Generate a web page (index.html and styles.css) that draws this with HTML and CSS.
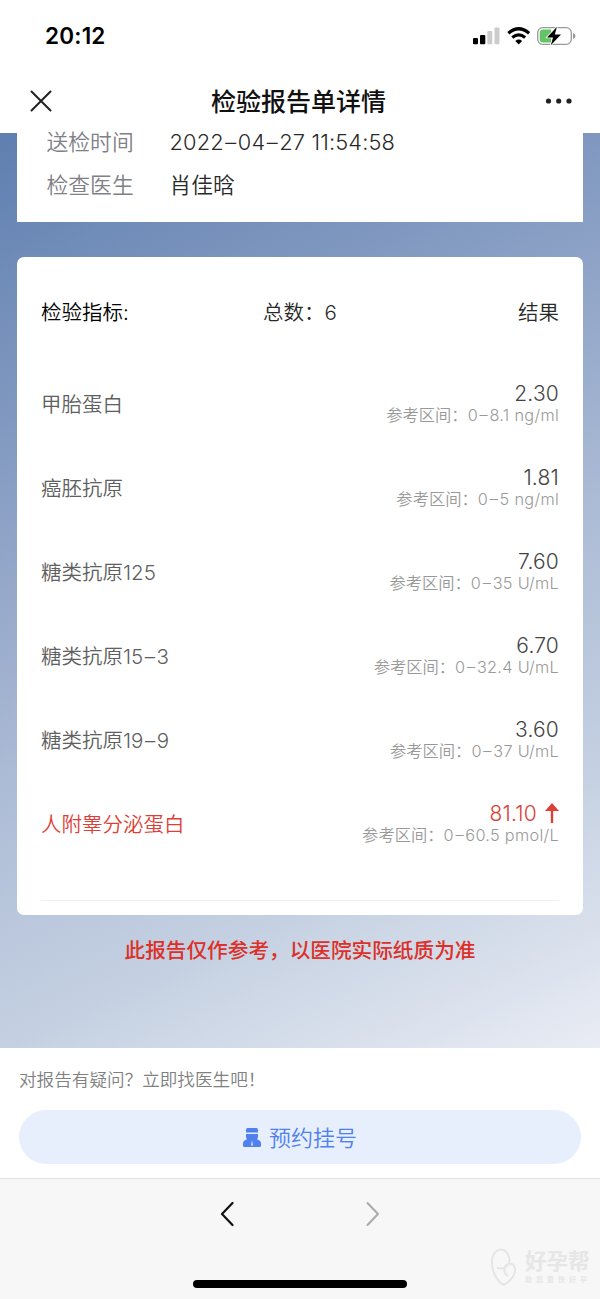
FILE: index.html
```html
<!DOCTYPE html>
<html lang="zh-CN">
<head>
<meta charset="utf-8">
<title>检验报告单详情</title>
<link rel="stylesheet" href="styles.css">
</head>
<body>
<div class="screen">
  <header class="top">
    <div class="status">
      <span class="clock">20:12</span>
      <svg class="status-icons" width="104" height="20" viewBox="0 0 104 20">
        <rect x="1" y="12" width="5" height="6.300" rx="1"/>
        <rect x="8" y="9" width="5.300" height="9.300" rx="1"/>
        <g fill="#ccc"><rect x="15.300" y="5" width="5" height="13.300" rx="1"/><rect x="22.500" y="1.500" width="5" height="16.800" rx="1"/></g>
        <g fill="none" stroke="#000" stroke-width="3.200">
          <path d="M36.300 7.200Q46.700-1.700 57.100 7.200"/>
          <path d="M40.300 11.400Q46.700 6.200 53.100 11.400"/>
        </g>
        <path d="M43.300 15Q46.700 12.200 50.100 15L46.700 18.400Z"/>
        <rect x="65.700" y="1.700" width="33.600" height="16.600" rx="5" fill="#fff" stroke="#999" stroke-width="1.300"/>
        <path d="M71 3.500H79V16.500H71Q67.700 16.500 67.700 13V7Q67.700 3.500 71 3.500Z" fill="#63c466"/>
        <path d="M101 7Q103.500 8 103.500 10T101 13Z" fill="#999"/>
        <path d="M85 .8L75 11.400H81L78.800 19.200L89 8.600H82.800Z" stroke="#fff" stroke-width="1.600" paint-order="stroke"/>
      </svg>
    </div>
    <div class="nav">
      <svg width="22" height="22" viewBox="0 0 22 22" fill="none" stroke="#222" stroke-width="2" stroke-linecap="round"><path d="M1.500 1.500L20.500 20.500M20.500 1.500L1.500 20.500"/></svg>
      <h1 class="title">检验报告单详情</h1>
      <svg width="28" height="6" viewBox="0 0 28 6" fill="#222"><circle cx="3.500" cy="3" r="2.600"/><circle cx="13.700" cy="3" r="2.600"/><circle cx="24" cy="3" r="2.600"/></svg>
    </div>
  </header>

  <main class="content">
    <section class="card info">
      <div class="info-row"><span class="info-label">送检时间</span><span class="info-date">2022<s>–</s>04<s>–</s>27 11:54:58</span></div>
      <div class="info-row"><span class="info-label">检查医生</span><span>肖佳晗</span></div>
    </section>

    <section class="card results">
      <div class="head"><span class="head-name">检验指标:</span><span>总数：6</span><span class="head-result">结果</span></div>
      <div class="item"><span class="name">甲胎蛋白</span><div class="value"><b class="num">2.30</b><span class="range">参考区间：<i>0<s>–</s>8.1 ng/ml</i></span></div></div>
      <div class="item"><span class="name">癌胚抗原</span><div class="value"><b class="num">1.81</b><span class="range">参考区间：<i>0<s>–</s>5 ng/ml</i></span></div></div>
      <div class="item"><span class="name">糖类抗原125</span><div class="value"><b class="num">7.60</b><span class="range">参考区间：<i>0<s>–</s>35 U/mL</i></span></div></div>
      <div class="item"><span class="name">糖类抗原15<s>–</s>3</span><div class="value"><b class="num">6.70</b><span class="range">参考区间：<i>0<s>–</s>32.4 U/mL</i></span></div></div>
      <div class="item"><span class="name">糖类抗原19<s>–</s>9</span><div class="value"><b class="num">3.60</b><span class="range">参考区间：<i>0<s>–</s>37 U/mL</i></span></div></div>
      <div class="item high"><span class="name">人附睾分泌蛋白</span><div class="value"><b class="num">81.10<svg class="up" width="14" height="20" viewBox="0 0 14 20"><path d="M7 0L14 8H8.200V20H5.800V8H0Z"/></svg></b><span class="range">参考区间：<i>0<s>–</s>60.5 pmol/L</i></span></div></div>
      <div class="rule"></div>
    </section>

    <p class="notice">此报告仅作参考，以医院实际纸质为准</p>
  </main>

  <section class="consult">
    <p class="question">对报告有疑问？立即找医生吧！</p>
    <div class="book">
      <svg width="18" height="19" viewBox="0 0 18 19" fill="#5080ee">
        <path d="M4.500 0H13.500Q15 0 15 1.800V4.500H3V1.800Q3 0 4.500 0Z"/>
        <path d="M3 6H15V8.500Q15 10 14 11.200L16.500 12.500Q18 13.500 18 15.500V17.500Q18 19 16.500 19H1.500Q0 19 0 17.500V15.500Q0 13.500 1.500 12.500L4 11.200Q3 10 3 8.500Z"/>
        <path d="M9 12.500L10 17.500H8Z" fill="#e7effc"/>
      </svg>
      <span class="book-text">预约挂号</span>
    </div>
  </section>

  <footer class="browser">
    <div class="arrows">
      <svg width="14" height="26" viewBox="0 0 14 26" fill="none" stroke="#111" stroke-width="2.200" stroke-linecap="round" stroke-linejoin="round"><path d="M12.500 2L2 13L12.500 24"/></svg>
      <svg width="14" height="26" viewBox="0 0 14 26" fill="none" stroke="#aaa" stroke-width="2" stroke-linecap="round" stroke-linejoin="round"><path d="M1.500 2L12 13L1.500 24"/></svg>
    </div>
    <div class="home"></div>
    <div class="watermark">
      <svg width="27" height="39" viewBox="0 0 27 39" fill="none" stroke="#e5e5e5" stroke-width="2"><path d="M7 20C16 22 21 16 19 9C17 2 11 0 6.500 3C0 8 1 19 5 27C8 33 11 36 14 37C20 33 26 27 25 20C23 14 16 15 14.500 20C14 24 16 27 18 28"/></svg>
      <div class="mark-text"><span class="mark-name">好孕帮</span><span class="mark-line">助您更快好孕</span></div>
    </div>
  </footer>
</div>
</body>
</html>
```
FILE: styles.css
```css
* { box-sizing: border-box; margin: 0; padding: 0; }
body { background: #fff; }
svg { display: block; flex: none; }

/* wide dash between numbers */
s { text-decoration: none; margin: 0 1.500px; }

.screen {
  width: 600px;
  height: 1299px;
  display: flex;
  flex-direction: column;
  overflow: hidden;
  font-family: Inter, "Noto Sans CJK SC", sans-serif;
  font-weight: 350;
  color: #2a2a2a;
  white-space: nowrap;
}

.top { height: 133px; flex: none; background: #fff; }
.status { height: 72px; padding: 0 24px 0 45px; display: flex; align-items: center; justify-content: space-between; }
.clock { font-size: 22.500px; line-height: 26px; font-weight: 600; color: #000; letter-spacing: .2px; }
.nav { height: 58px; padding: 0 27px 0 30px; display: flex; align-items: center; justify-content: space-between; }
.title { font-size: 25px; font-weight: 500; color: #111; line-height: 36px; padding-top: 2px; }

.content {
  height: 915px;
  flex: none;
  padding: 0 17px;
  background: linear-gradient(155deg, #5f7fb0 0%, #8da2c6 33%, #adbcd6 55%, #c5d1e2 77%, #e9ecf4 100%);
}
.card { background: #fff; width: 566px; }

.info { height: 89px; padding: 1px 30px 0; font-size: 21.800px; }
.info-row { display: flex; height: 43px; line-height: 32px; }
.info-row:first-child { height: 35px; line-height: 16px; }
.info-label { width: 123px; margin-left: -.5px; color: #808087; }
.info-date { font-weight: 300; letter-spacing: .15px; }

.results { height: 658px; margin-top: 35px; border-radius: 7px; padding: 27px 24px 0; }
.head { display: grid; grid-template-columns: 222px 1fr auto; height: 78px; line-height: 58px; font-size: 20.500px; }
.head-name { color: #000; }
.item { height: 84px; display: flex; justify-content: space-between; align-items: center; font-size: 20.500px; color: #606060; }
.name { padding-bottom: 2px; }
.value { display: flex; flex-direction: column; align-items: flex-end; }
.num { display: flex; align-items: center; font-size: 21px; line-height: 22px; font-weight: 300; letter-spacing: .2px; color: #444; }
.range { font-size: 16.300px; line-height: 22px; margin-top: -1px; color: #999; }
.range i { font-style: normal; letter-spacing: .3px; }
.high, .high .num { color: #dc3f38; }
.up { margin-left: 8px; margin-bottom: 2px; fill: #dc3f38; }
.rule { height: 1px; margin-top: 34px; background: #f0f0f0; }

.notice { margin-top: 21px; text-align: center; font-size: 20.650px; line-height: 30px; font-weight: 500; color: #dd3028; }

.consult { height: 130px; flex: none; padding: 18px 19px 0; background: #fff; }
.question { font-size: 17.600px; line-height: 28px; color: #808080; }
.book {
  height: 54px;
  margin-top: 16px;
  border-radius: 27px;
  background: #e7effc;
  display: flex;
  align-items: center;
  justify-content: center;
  gap: 8px;
  font-size: 22px;
  color: #5080ee;
}
.book-text { padding-bottom: 3px; }

.browser { flex: 1; position: relative; border-top: 1px solid #e2e2e2; background: #f7f7f7; padding-top: 22px; }
.arrows { display: flex; justify-content: center; gap: 132px; }
.home { width: 214px; height: 8px; margin: 53px auto 0; border-radius: 4px; background: #000; }
.watermark { position: absolute; right: 9px; bottom: 12px; display: flex; gap: 8px; color: #e6e6e6; }
.mark-text { display: flex; flex-direction: column; }
.mark-name { font-size: 21.500px; line-height: 27px; font-weight: 700; }
.mark-line { font-size: 7px; line-height: 10px; letter-spacing: 4px; font-weight: 700; }
```
